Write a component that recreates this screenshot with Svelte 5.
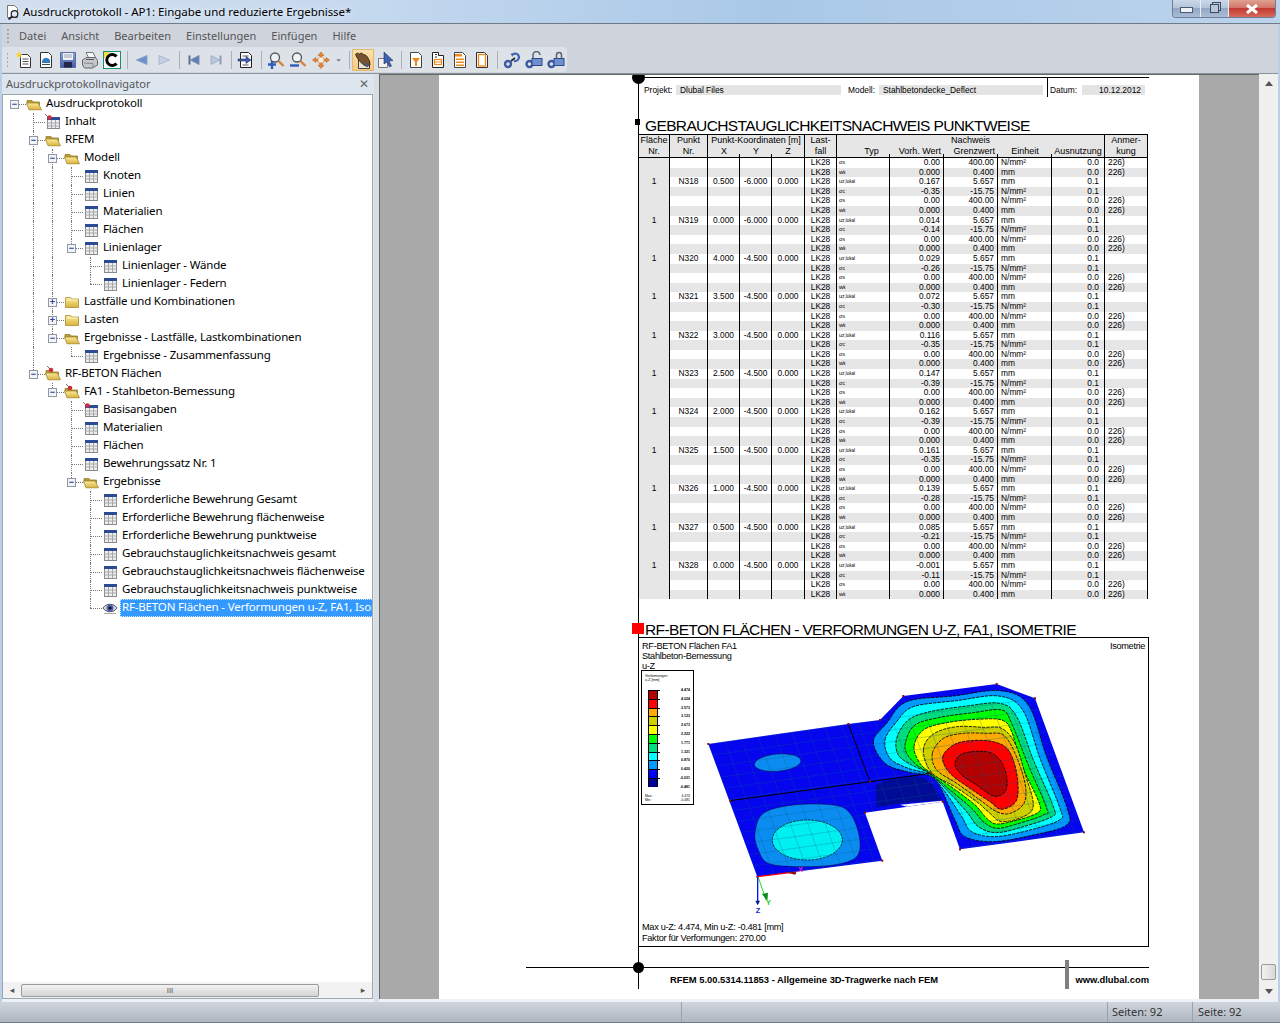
<script>
  const menu = ['Datei', 'Ansicht', 'Bearbeiten', 'Einstellungen', 'Einfügen', 'Hilfe'];

  // toolbar: icon id, or '|' for a separator
  const tools = ['new', 'pic', 'save', 'print', 'c', '|', 'back', 'fwd', '|', 'first', 'last', '|', 'docarrow', '|',
    'zoomin', 'zoomout', 'move', 'drop', '|', 'hand', 'pick', '|', 'dfilter', 'dbox', 'dlines', 'dempty', '|', 'link1', 'link2', 'link3'];

  const tree = [
    [0, 'Ausdruckprotokoll', 'open', '-'],
    [1, 'Inhalt', 'tablepin'],
    [1, 'RFEM', 'open', '-'],
    [2, 'Modell', 'open', '-'],
    [3, 'Knoten', 'table'],
    [3, 'Linien', 'table'],
    [3, 'Materialien', 'table'],
    [3, 'Flächen', 'table'],
    [3, 'Linienlager', 'table', '-'],
    [4, 'Linienlager - Wände', 'table'],
    [4, 'Linienlager - Federn', 'table'],
    [2, 'Lastfälle und Kombinationen', 'closed', '+'],
    [2, 'Lasten', 'closed', '+'],
    [2, 'Ergebnisse - Lastfälle, Lastkombinationen', 'open', '-'],
    [3, 'Ergebnisse - Zusammenfassung', 'table'],
    [1, 'RF-BETON Flächen', 'openpin', '-'],
    [2, 'FA1 - Stahlbeton-Bemessung', 'openpin', '-'],
    [3, 'Basisangaben', 'tablepin'],
    [3, 'Materialien', 'table'],
    [3, 'Flächen', 'table'],
    [3, 'Bewehrungssatz Nr. 1', 'table'],
    [3, 'Ergebnisse', 'open', '-'],
    [4, 'Erforderliche Bewehrung Gesamt', 'table'],
    [4, 'Erforderliche Bewehrung flächenweise', 'table'],
    [4, 'Erforderliche Bewehrung punktweise', 'table'],
    [4, 'Gebrauchstauglichkeitsnachweis gesamt', 'table'],
    [4, 'Gebrauchstauglichkeitsnachweis flächenweise', 'table'],
    [4, 'Gebrauchstauglichkeitsnachweis punktweise', 'table'],
    [4, 'RF-BETON Flächen - Verformungen u-Z, FA1, Isometrie', 'eye']
  ];

  // does level l go on below row i?
  function goesOn(i, l) {
    for (let j = i + 1; j < tree.length; j++) {
      if (tree[j][0] < l) return false;
      if (tree[j][0] === l) return true;
    }
    return false;
  }

  const levels = (n) => Array.from({ length: n }, (_, k) => k);

  const nodes = [
    ['N318', '0.500', '-6.000', '0.167', '-0.35'],
    ['N319', '0.000', '-6.000', '0.014', '-0.14'],
    ['N320', '4.000', '-4.500', '0.029', '-0.26'],
    ['N321', '3.500', '-4.500', '0.072', '-0.30'],
    ['N322', '3.000', '-4.500', '0.116', '-0.35'],
    ['N323', '2.500', '-4.500', '0.147', '-0.39'],
    ['N324', '2.000', '-4.500', '0.162', '-0.39'],
    ['N325', '1.500', '-4.500', '0.161', '-0.35'],
    ['N326', '1.000', '-4.500', '0.139', '-0.28'],
    ['N327', '0.500', '-4.500', '0.085', '-0.21'],
    ['N328', '0.000', '-4.500', '-0.001', '-0.11']
  ];

  const rows = [];
  nodes.forEach((n) => {
    rows.push({ typ: 'σ', sub: 's', vorh: '0.00', grenz: '400.00', unit: 'N/mm²', ausn: '0.0', note: '226)' });
    rows.push({ typ: 'w', sub: 'k', vorh: '0.000', grenz: '0.400', unit: 'mm', ausn: '0.0', note: '226)' });
    rows.push({ node: n, typ: 'u', sub: 'z,lokal', vorh: n[3], grenz: '5.657', unit: 'mm', ausn: '0.1', note: '' });
    rows.push({ typ: 'σ', sub: 'c', vorh: n[4], grenz: '-15.75', unit: 'N/mm²', ausn: '0.1', note: '' });
  });
  rows.push({ typ: 'σ', sub: 's', vorh: '0.00', grenz: '400.00', unit: 'N/mm²', ausn: '0.0', note: '226)' });
  rows.push({ typ: 'w', sub: 'k', vorh: '0.000', grenz: '0.400', unit: 'mm', ausn: '0.0', note: '226)' });

  const legend = [
    ['#b30000', '4.474'], ['#ff0000', '4.024'], ['#ffaa00', '3.573'], ['#cfcf00', '3.123'],
    ['#ffff00', '2.673'], ['#00ff00', '2.222'], ['#00dd80', '1.771'], ['#00ffff', '1.321'],
    ['#0099ff', '0.870'], ['#0000ff', '0.420'], ['#000099', '-0.031']
  ];

  function smooth(p) {
    const n = p.length;
    let d = `M${p[0][0]} ${p[0][1]}`;
    for (let i = 0; i < n; i++) {
      const a = p[(i - 1 + n) % n], b = p[i], c = p[(i + 1) % n], e = p[(i + 2) % n];
      const c1 = [b[0] + (c[0] - a[0]) / 6, b[1] + (c[1] - a[1]) / 6];
      const c2 = [c[0] - (e[0] - b[0]) / 6, c[1] - (e[1] - b[1]) / 6];
      d += `C${c1[0].toFixed(1)} ${c1[1].toFixed(1)} ${c2[0].toFixed(1)} ${c2[1].toFixed(1)} ${c[0]} ${c[1]}`;
    }
    return d + 'Z';
  }

  const outline = '25,222 445,162 540,150 610,78 890,42 1005,85 1152,487 780,538 728,395 495,428 547,572 172,620';
  const corners = outline.split(' ').map((s) => s.split(',').map(Number));
  corners.push([510, 335], [692, 310], [90, 392]);

  const rings = [
    ['#0099ff', [[520,215],[560,160],[620,95],[760,78],[900,62],[985,105],[1040,260],[1100,410],[1100,465],[1000,495],[880,515],[795,500],[765,450],[720,350],[690,318],[620,305],[555,280]]],
    ['#00ffff', [[555,210],[590,155],[640,110],[770,92],[895,78],[968,120],[1020,265],[1080,415],[1078,450],[990,480],[885,500],[815,485],[785,440],[735,365],[690,315],[625,295],[570,265]]],
    ['#00dd80', [[590,205],[625,150],[690,125],[800,108],[900,100],[950,140],[1000,270],[1060,410],[1055,440],[970,470],[890,488],[835,470],[800,425],[745,365],[690,312],[635,285],[595,255]]],
    ['#00ff00', [[617,215],[645,165],[720,142],[820,128],[905,120],[935,160],[985,285],[1040,415],[1030,435],[950,462],[890,475],[850,455],[815,415],[750,360],[690,310],[650,285],[620,250]]],
    ['#ffff00', [[642,230],[670,180],[740,158],[830,148],[905,150],[935,185],[965,285],[1018,400],[1010,430],[945,452],[890,462],[860,445],[825,405],[760,355],[692,308],[660,280]]],
    ['#cfcf00', [[670,240],[700,192],[770,170],[850,172],[905,175],[945,220],[975,310],[1000,405],[970,440],[905,455],[870,430],[830,395],[765,350],[695,308]]],
    ['#ffaa00', [[697,250],[730,205],[790,190],[860,190],[910,195],[945,250],[975,340],[972,400],[930,430],[890,425],[840,390],[770,340],[710,300]]],
    ['#ff0000', [[728,262],[760,225],[810,212],[880,215],[925,240],[950,310],[950,390],[905,418],[870,395],[810,355],[750,310]]],
    ['#b30000', [[765,280],[790,250],[860,245],[900,270],[920,320],[915,365],[880,378],[830,345],[785,315]]]
  ];
  const squarish = smooth([[165,490],[190,430],[280,405],[400,405],[450,430],[478,500],[470,560],[400,585],[290,590],[205,580],[175,540]]);

  const meshU = levels(17).map((k) => {
    const x = 25 + k * 12.25, y = 222 + k * 33.2;
    return [x, y, x + 1180, y - 165];
  });
  const meshV = levels(24).map((k) => {
    const x = 25 + k * 50, y = 222 - k * 7;
    return [x, y, x + 220, y + 597];
  });
</script>

<svg class="defs" aria-hidden="true">
  <defs>
    <linearGradient id="fold" x1="0" y1="0" x2="0" y2="1"><stop offset="0" stop-color="#fbeb9c"/><stop offset="1" stop-color="#d8b23c"/></linearGradient>
    <linearGradient id="flop" x1="0" y1="0" x2="0" y2="1"><stop offset="0" stop-color="#8ea6dc"/><stop offset="1" stop-color="#3f58a8"/></linearGradient>
    <symbol id="table" viewBox="0 0 16 16">
      <rect x="2.5" y="2.5" width="12" height="12" fill="#eceef0" stroke="#8a8a8a"/>
      <rect x="2" y="2" width="13" height="3" fill="#2d4a94"/>
      <path d="M2.5 8h12M2.5 11h12M6.5 5v9M10.5 5v9" stroke="#a8a8a8"/>
    </symbol>
    <symbol id="tablepin" viewBox="0 0 16 16">
      <rect x="2.5" y="3.5" width="12" height="11" fill="#eceef0" stroke="#8a8a8a"/>
      <rect x="2" y="3" width="13" height="3" fill="#2d4a94"/>
      <path d="M2.5 9h12M2.5 12h12M6.5 6v8M10.5 6v8" stroke="#a8a8a8"/>
      <path d="M0 0l3 3" stroke="#777" stroke-width="1"/><circle cx="4.5" cy="3.5" r="2.2" fill="#d22c38"/>
    </symbol>
    <symbol id="open" viewBox="0 0 16 16">
      <path d="M1 4.500h5l1.500 1.500h6v3H1z" fill="#b89a3a" stroke="#8d7420" stroke-width=".7"/>
      <path d="M.5 7h11.700l3.300 6.800H3z" fill="url(#fold)" stroke="#9a7e22" stroke-width=".7"/>
    </symbol>
    <symbol id="closed" viewBox="0 0 16 16">
      <path d="M1.500 3.500h5l1.500 1.500h6.500v8.500h-13z" fill="url(#fold)" stroke="#a98d2e" stroke-width=".8"/>
      <path d="M2.500 6h11" stroke="#fff6c0"/>
    </symbol>
    <symbol id="openpin" viewBox="0 0 16 16">
      <path d="M1 4.500h5l1.500 1.500h6v3H1z" fill="#b89a3a" stroke="#8d7420" stroke-width=".7"/>
      <path d="M.5 7h11.700l3.300 6.800H3z" fill="url(#fold)" stroke="#9a7e22" stroke-width=".7"/>
      <path d="M2 0l3 3" stroke="#777"/><circle cx="6" cy="4" r="2.300" fill="#d22c38"/>
    </symbol>
    <symbol id="eye" viewBox="0 0 16 16">
      <path d="M1 8c3-5 11-5 14 0-3 5-11 5-14 0z" fill="#d6d9e4" stroke="#555"/>
      <circle cx="8" cy="8" r="3.500" fill="#4a62b8"/><circle cx="8" cy="8" r="1.600" fill="#111"/>
      <path d="M2 13.500h12" stroke="#aaa"/>
    </symbol>
    <symbol id="docicon" viewBox="0 0 16 16">
      <path d="M2.500 1.500h7l3 3v9h-10z" fill="#fff" stroke="#777"/>
      <circle cx="9.500" cy="10" r="3.300" fill="#dfe8f4" stroke="#222" stroke-width="1.200"/>
      <path d="M7 12.500L3.500 15.500" stroke="#222" stroke-width="1.800"/>
    </symbol>

    <symbol id="new" viewBox="0 0 18 18">
      <path d="M5.500 3.500h7l3 3v10h-10z" fill="#fff" stroke="#333"/><path d="M7.500 8h6M7.500 10.500h6M7.500 13h6" stroke="#555"/>
      <path d="M4 0l1 2.500 2.500.5-2 1.500.5 2.500L4 5.500 2 7l.5-2.500-2-1.500L3 2.500z" fill="#f7d530"/>
    </symbol>
    <symbol id="pic" viewBox="0 0 18 18">
      <path d="M3.500 1.500h8l3 3v12h-11z" fill="#fff" stroke="#333"/><path d="M5 10c2-4 5-4 8-1v3H5z" fill="#2f7fbd"/><path d="M5 13.500h8" stroke="#444"/>
    </symbol>
    <symbol id="save" viewBox="0 0 18 18">
      <path d="M1.500 1.500h15v15h-15z" fill="url(#flop)" stroke="#5a6f9f"/><rect x="4" y="2" width="10" height="7" fill="#eef1f6"/><path d="M5 4h8M5 6h8" stroke="#9aa3b5"/><rect x="5" y="11" width="8" height="5.500" fill="#23284a"/>
    </symbol>
    <symbol id="print" viewBox="0 0 18 18">
      <path d="M5 1.500h7l3 6H8z" fill="#fafafa" stroke="#777"/><path d="M1.500 9l4-2.500h9l2 3v4.500l-5 3h-8l-2-3z" fill="#c4c8ce" stroke="#666"/><path d="M3 12l9 .5v4" fill="none" stroke="#888"/><path d="M5 8.500h8" stroke="#555"/>
    </symbol>
    <symbol id="c" viewBox="0 0 18 18">
      <rect x=".5" y=".5" width="17" height="17" fill="#fff" stroke="#16906e"/><path d="M1 1h6L1 8z" fill="#f5dc3c"/>
      <path d="M13.500 5.500A5.500 5.500 0 1 0 13.500 12.500" fill="none" stroke="#000" stroke-width="3"/>
    </symbol>
    <symbol id="back" viewBox="0 0 18 18"><path d="M3.500 9L14 4.500v9z" fill="#6d8fd0" stroke="#8aa0c4"/></symbol>
    <symbol id="fwd" viewBox="0 0 18 18"><path d="M14.500 9L4 4.500v9z" fill="#c3d0e2" stroke="#a9b8cc"/></symbol>
    <symbol id="first" viewBox="0 0 18 18"><path d="M4.500 4.500v9" stroke="#5b6d8c" stroke-width="2"/><path d="M5.500 9L14 4.500v9z" fill="#5f80bd" stroke="#7c8ea9"/></symbol>
    <symbol id="last" viewBox="0 0 18 18"><path d="M13.500 4.500v9" stroke="#8c9ab0" stroke-width="2"/><path d="M12.500 9L4 4.500v9z" fill="#b9c8dc" stroke="#a3b1c4"/></symbol>
    <symbol id="docarrow" viewBox="0 0 18 18">
      <path d="M3.500 1.500h8l3 3v12h-11z" fill="#fff" stroke="#222"/><path d="M5.500 5h6M5.500 14h6" stroke="#555"/><path d="M1 8h8V5.500l5 3.500-5 3.500V10H1z" fill="#3b5ea8" stroke="#1f3468" stroke-width=".6"/>
    </symbol>
    <symbol id="zoomin" viewBox="0 0 18 18">
      <circle cx="8" cy="6.500" r="4.500" fill="#eef3f8" stroke="#555" stroke-width="1.300"/><path d="M11.500 10l5 5" stroke="#d9803a" stroke-width="2.400"/><path d="M1 13.500h8M5 10v8" stroke="#2f5cb8" stroke-width="2.400"/>
    </symbol>
    <symbol id="zoomout" viewBox="0 0 18 18">
      <circle cx="8" cy="6.500" r="4.500" fill="#eef3f8" stroke="#555" stroke-width="1.300"/><path d="M11.500 10l5 5" stroke="#d9803a" stroke-width="2.400"/><path d="M1 14.500h9" stroke="#2f5cb8" stroke-width="2.400"/>
    </symbol>
    <symbol id="move" viewBox="0 0 18 18">
      <path d="M9 1l3 3.500h-2v1l3 3h1V6.500L17.500 9 14 11.500v-2h-1l-3 3.500v1h2L9 17.500 6 14h2v-1L5 9.500H4v2L.5 9 4 6.500V8.500h1l3-3v-1H6z" fill="#e8872f" stroke="#a85a18" stroke-width=".5"/><rect x="6.500" y="6.500" width="5" height="5" fill="#f2efe6"/>
    </symbol>
    <symbol id="drop" viewBox="0 0 18 18"><path d="M5 8h7l-3.500 3.500z" fill="#7a7f88"/></symbol>
    <symbol id="hand" viewBox="0 0 18 18">
      <path d="M4.500 6.500v11h11v-7" fill="#e9e4d6" stroke="#444"/><path d="M1.500 3.500c1-2 3-1.500 4-.5l2-1 2 1.500 2 .5 2 2 2 4 .500 4-3 1.500-4-2-4-4-2-3z" fill="#7a5230" stroke="#2a1c10" stroke-width=".8"/><path d="M11 11l4 3-1.500 2z" fill="#2f5cb8"/>
    </symbol>
    <symbol id="pick" viewBox="0 0 18 18">
      <path d="M1.500 7.500h9v9h-9z" fill="#f3f3f3" stroke="#777"/><path d="M7 1l9 8.500-4 .5 2.500 5-2 1-2.500-5L7 13z" fill="#3f62ad" stroke="#1f3468" stroke-width=".6"/>
    </symbol>
    <symbol id="dfilter" viewBox="0 0 18 18">
      <path d="M3.500 1.500h8l3 3v12h-11z" fill="#fff" stroke="#444"/><path d="M5 7h8L10 11v4H8v-4z" fill="#ee8a1e"/>
    </symbol>
    <symbol id="dbox" viewBox="0 0 18 18">
      <path d="M3.500 1.500h6v3h5v12h-11z" fill="#fff" stroke="#222"/><path d="M6 3.500h2M6 6h2" stroke="#333"/><rect x="5.500" y="8.500" width="7" height="5" fill="#fff" stroke="#ee8a1e" stroke-width="1.200"/><path d="M5.500 11h7" stroke="#ee8a1e"/>
    </symbol>
    <symbol id="dlines" viewBox="0 0 18 18">
      <path d="M3.500 1.500h8l3 3v12h-11z" fill="#fff" stroke="#444"/><path d="M4 3h7v2.500H4zM5 7.500h8v1.500H5zM5 10.500h8V12H5zM5 13.500h8V15H5z" fill="#ee8a1e"/>
    </symbol>
    <symbol id="dempty" viewBox="0 0 18 18">
      <path d="M3.500 1.500h8l3 3v12h-11z" fill="#fff" stroke="#333"/><rect x="5.500" y="3.500" width="7" height="11.500" fill="#fff" stroke="#ee8a1e" stroke-width="1.300"/>
    </symbol>
    <symbol id="link1" viewBox="0 0 18 18">
      <circle cx="5" cy="13" r="3" fill="none" stroke="#3c5a9e" stroke-width="2.400"/><path d="M8 10l4-3" stroke="#222" stroke-width="1.600"/><path d="M9 4a4 4 0 0 1 7 2 4 4 0 0 1-5 4" fill="none" stroke="#3f66b4" stroke-width="2.200"/><path d="M7.500 2.500l3 .5-1 3z" fill="#3f66b4"/>
    </symbol>
    <symbol id="link2" viewBox="0 0 18 18">
      <circle cx="4.500" cy="13" r="3" fill="none" stroke="#3c5a9e" stroke-width="2.400"/><rect x="7" y="7.500" width="10" height="7" fill="#6f8fd0" stroke="#2f4a88"/><path d="M8 7V4a3.500 3.500 0 0 1 7 0" fill="none" stroke="#566" stroke-width="1.500"/>
    </symbol>
    <symbol id="link3" viewBox="0 0 18 18">
      <circle cx="4.500" cy="13" r="3" fill="none" stroke="#3c5a9e" stroke-width="2.400"/><rect x="7" y="7.500" width="10" height="7" fill="#6f8fd0" stroke="#2f4a88"/><path d="M9.500 7V4a2.500 2.500 0 0 1 5 0v3" fill="none" stroke="#566" stroke-width="1.500"/>
    </symbol>
  </defs>
</svg>

<div class="app">
  <header class="titlebar">
    <svg class="titleicon"><use href="#docicon"/></svg>
    <span class="title">Ausdruckprotokoll - AP1: Eingabe und reduzierte Ergebnisse*</span>
    <div class="winbtns">
      <span class="wb"><i class="min"></i></span>
      <span class="wb"><i class="rest"></i></span>
      <span class="wb close"><svg width="14" height="10" viewBox="0 0 14 10"><path d="M2 1l10 8M12 1L2 9" stroke="#fff" stroke-width="3"/></svg></span>
    </div>
  </header>

  <div class="frame">
    <nav class="menubar">
      <span class="grip"></span>
      {#each menu as m}<span>{m}</span>{/each}
    </nav>

    <div class="toolrow">
      <div class="toolbar">
        <span class="grip"></span>
        {#each tools as t}
          {#if t === '|'}
            <span class="sep"></span>
          {:else}
            <span class="tool {t}"><svg width="18" height="18"><use href="#{t}"/></svg></span>
          {/if}
        {/each}
      </div>
    </div>

    <div class="main">
      <aside class="panel">
        <div class="panelhead"><span>Ausdruckprotokollnavigator</span><b>✕</b></div>
        <div class="tree">
          {#each tree as [level, text, icon, toggle], i}
            <div class="row">
              <span class="lead"></span>
              {#each levels(level) as l}
                <span class="indent" class:line={l > 0 && goesOn(i, l)}></span>
              {/each}
              <span class="node">
                {#if level > 0}<i class="v" class:half={!goesOn(i, level)}></i>{/if}
                <i class="h"></i>
                {#if toggle}<i class="toggle">{toggle === '-' ? '−' : '+'}</i>{/if}
                <svg class="ico"><use href="#{icon}"/></svg>
              </span>
              <span class="label" class:sel={icon === 'eye'}>{text}</span>
            </div>
          {/each}
        </div>
        <div class="hscroll">
          <span class="arr">◂</span>
          <span class="thumb">III</span>
          <span class="arr">▸</span>
        </div>
      </aside>

      <div class="split"></div>

      <section class="view">
        <div class="canvas">
          <div class="page">
            <div class="sheet">
              <div class="meta">
                <span class="k k1">Projekt:</span><span class="f f1">Dlubal Files</span>
                <span class="k k2">Modell:</span><span class="f f2">Stahlbetondecke_Deflect</span>
                <span class="vsep"></span>
                <span class="k k3">Datum:</span><span class="f f3">10.12.2012</span>
              </div>

              <h2 class="sect first">GEBRAUCHSTAUGLICHKEITSNACHWEIS PUNKTWEISE</h2>

              <div class="thead">
                <div class="th g" style="grid-row: span 2">Fläche<br>Nr.</div>
                <div class="th g" style="grid-row: span 2">Punkt<br>Nr.</div>
                <div class="th g top" style="grid-column: span 3">Punkt-Koordinaten [m]</div>
                <div class="th g" style="grid-row: span 2">Last-<br>fall</div>
                <div class="th g top" style="grid-column: span 5">Nachweis</div>
                <div class="th g" style="grid-row: span 2">Anmer-<br>kung</div>
                <div class="th tick">X</div>
                <div class="th tick">Y</div>
                <div class="th g">Z</div>
                <div class="th tick typ">Typ</div>
                <div class="th tick rt">Vorh. Wert</div>
                <div class="th tick rt">Grenzwert</div>
                <div class="th tick">Einheit</div>
                <div class="th g">Ausnutzung</div>
              </div>

              <div class="tbody">
                {#each rows as r, i}
                  <div class="tr" class:alt={i % 2 === 1}>
                    <span class="td c0">{r.node ? '1' : ''}</span>
                    <span class="td">{r.node ? r.node[0] : ''}</span>
                    <span class="td">{r.node ? r.node[1] : ''}</span>
                    <span class="td">{r.node ? r.node[2] : ''}</span>
                    <span class="td">{r.node ? '0.000' : ''}</span>
                    <span class="td">LK28</span>
                    <span class="td lf">{r.typ}<sub>{r.sub}</sub></span>
                    <span class="td rt">{r.vorh}</span>
                    <span class="td rt">{r.grenz}</span>
                    <span class="td lf u">{r.unit}</span>
                    <span class="td rt au">{r.ausn}</span>
                    <span class="td lf n">{r.note}</span>
                  </div>
                {/each}
              </div>

              <h2 class="sect second">RF-BETON FLÄCHEN - VERFORMUNGEN U-Z, FA1, ISOMETRIE</h2>

              <figure class="fig">
                <div class="fighead">
                  <div>RF-BETON Flächen FA1<br>Stahlbeton-Bemessung<br>u-Z</div>
                  <div>Isometrie</div>
                </div>
                <div class="figbody">
                  <div class="legend">
                    <div class="lgtitle">Verformungen<br>u-Z [mm]</div>
                    <div class="bars">
                      {#each legend as [col, val]}
                        <div class="bar"><i style="background:{col}"></i><em></em><span>{val}</span></div>
                      {/each}
                      <div class="bar lastval"><span>-0.481</span></div>
                    </div>
                    <div class="minmax"><span>Max :</span><span>4.474</span></div>
                    <div class="minmax"><span>Min :</span><span>-0.481</span></div>
                  </div>
                  <svg class="plot" width="400" height="250" viewBox="0 0 1200 750">
                    <defs>
                      <clipPath id="plate"><polygon points={outline}/></clipPath>
                    </defs>
                    <polygon points={outline} fill="#0606ee"/>
                    <polygon points="527,345 555,332 640,318 675,325 705,350 725,392 640,395 530,412" fill="#000c96"/>
                    <polygon points="600,404 725,392 728,395 620,410" fill="#fff"/>
                    <ellipse cx="233" cy="278" rx="70" ry="26" transform="rotate(-5 233 278)" fill="#0a8cf0" stroke="#003" stroke-width="1.500"/>
                    <path d={squarish} fill="#0a8cf0" stroke="#003" stroke-width="1.500"/>
                    <ellipse cx="322" cy="510" rx="105" ry="60" fill="#00f0f0" stroke="#000" stroke-width="2" stroke-dasharray="8 3"/>
                    {#each rings as [col, pts]}
                      <path d={smooth(pts)} fill={col} stroke="#000" stroke-width="2.500" stroke-dasharray="10 3"/>
                    {/each}
                    <g clip-path="url(#plate)" stroke="#0b5f8c" stroke-opacity=".5" stroke-width="1.600">
                      {#each meshU as [a, b, c, d]}<line x1={a} y1={b} x2={c} y2={d}/>{/each}
                      {#each meshV as [a, b, c, d]}<line x1={a} y1={b} x2={c} y2={d}/>{/each}
                    </g>
                    <path d="M445 162L510 335M90 392L510 335 692 310" fill="none" stroke="#000" stroke-width="3"/>
                    {#each corners as [x, y]}
                      <rect x={x - 3} y={y - 3} width="6" height="6" fill="#8c0f0f"/>
                    {/each}
                    <path d="M172 620L270 608" stroke="#f00" stroke-width="4"/>
                    <path d="M260 608l30-4-4 10z" fill="#8c0f0f"/>
                    <path d="M175 622L198 690" stroke="#18e018" stroke-width="3"/>
                    <path d="M186 672l18-4-2 24z" fill="#0d8a1e"/>
                    <path d="M173 620v82" stroke="#0a14f0" stroke-width="4"/>
                    <path d="M166 692h14l-7 14z" fill="#0a1a78"/>
                    <text x="294" y="606" class="ax" fill="#e020c0">X</text>
                    <text x="198" y="706" class="ax" fill="#12d018">Y</text>
                    <text x="167" y="728" class="ax" fill="#1028d0">Z</text>
                  </svg>
                </div>
                <div class="figfoot">Max u-Z: 4.474, Min u-Z: -0.481 [mm]<br>Faktor für Verformungen: 270.00</div>
              </figure>

              <footer class="pagefoot">
                <span class="ftext">RFEM 5.00.5314.11853 - Allgemeine 3D-Tragwerke nach FEM</span>
                <span class="fbar"></span>
                <span class="furl">www.dlubal.com</span>
              </footer>
            </div>
          </div>
        </div>
        <div class="vscroll">
          <span class="up"></span>
          <span class="vspace"></span>
          <span class="vthumb"></span>
          <span class="down"></span>
        </div>
      </section>
    </div>
  </div>

  <footer class="status">
    <span class="s1"></span>
    <span class="s2"></span>
    <span class="s3">Seiten: 92</span>
    <span class="s4">Seite: 92</span>
  </footer>
</div>

<style>
  :global(body) {
    margin: 0;
    background: #cfd4dc;
  }

  .defs {
    position: absolute;
    width: 0;
    height: 0;
  }

  .app {
    width: 1280px;
    height: 1023px;
    display: flex;
    flex-direction: column;
    overflow: hidden;
    font-family: "Noto Sans", sans-serif;
  }

  .titlebar {
    height: 23px;
    flex: none;
    display: flex;
    align-items: center;
    padding-left: 5px;
    background: linear-gradient(90deg, #d2dfee 0, #c4d8ee 30%, #a9c8e8 60%, #bcd3ec 100%);
    border-bottom: 1px solid #6f7a88;
  }

  .titleicon {
    width: 16px;
    height: 16px;
    margin-right: 2px;
  }

  .title {
    font-size: 11.5px;
    letter-spacing: -0.04px;
    color: #000;
    text-shadow: 0 0 6px #fff;
  }

  .winbtns {
    margin-left: auto;
    margin-right: 4px;
    align-self: flex-start;
    display: flex;
    height: 17px;
    border: 1px solid #6c7f96;
    border-top: 0;
    border-radius: 0 0 4px 4px;
    overflow: hidden;
  }

  .wb {
    width: 27px;
    display: flex;
    align-items: center;
    justify-content: center;
    background: linear-gradient(#cbd8e8 0, #b4c5da 45%, #93a8c4 50%, #a9bdd6 100%);
    border-right: 1px solid #e7eef6;
  }

  .wb.close {
    width: 46px;
    border-right: 0;
    background: linear-gradient(#e0a090 0, #d2766a 45%, #c23a30 50%, #d6695c 100%);
  }

  .min {
    width: 11px;
    height: 4px;
    margin-top: 3px;
    background: #eef2f6;
    border: 1px solid #4a5a70;
  }

  .rest {
    width: 7px;
    height: 7px;
    background: #b8c6d8;
    border: 1px solid #3a4a60;
    box-shadow: 2px -2px 0 -1px #b8c6d8, 2px -2px 0 0 #3a4a60;
  }

  .frame {
    flex: 1;
    min-height: 0;
    display: flex;
    flex-direction: column;
    background: #cfd4dc;
    border-left: 2px solid #b9d0e8;
    border-right: 2px solid #b9d0e8;
  }

  .grip {
    width: 2px;
    height: 14px;
    background: repeating-linear-gradient(#a3a9b2 0 2px, transparent 2px 4px);
  }

  .menubar {
    height: 23px;
    flex: none;
    display: flex;
    align-items: center;
    gap: 15px;
    padding-left: 5px;
    font-size: 11px;
    color: #555;
  }

  .menubar .grip {
    margin-right: -5px;
  }

  .toolrow {
    height: 26px;
    flex: none;
  }

  .toolbar {
    width: 565px;
    height: 25px;
    display: flex;
    align-items: center;
    padding-left: 5px;
    box-sizing: border-box;
    background: #dde2e9;
    border-radius: 0 4px 4px 0;
  }

  .toolbar .grip {
    margin-right: 5px;
  }

  .tool {
    width: 22px;
    height: 22px;
    display: flex;
    align-items: center;
    justify-content: center;
    flex: none;
  }

  .tool.drop {
    width: 12px;
  }

  .tool.move {
    width: 24px;
  }

  .tool.hand {
    margin: 0 1px 0 -1px;
    background: linear-gradient(#fbe3b0, #f6c680);
    box-shadow: inset 0 0 0 1px #e3b874;
  }

  .sep {
    width: 1px;
    height: 18px;
    margin: 0 3.5px;
    background: #a9b0ba;
    flex: none;
  }

  .main {
    flex: 1;
    min-height: 0;
    display: flex;
    border-top: 1px solid #8a929c;
    background: #eef1f5;
  }

  .panel {
    width: 372px;
    flex: none;
    display: flex;
    flex-direction: column;
    margin-bottom: 3px;
    background: #dde5ee;
  }

  .panelhead {
    height: 20px;
    flex: none;
    display: flex;
    align-items: center;
    justify-content: space-between;
    padding: 0 5px 2px 4px;
    box-sizing: border-box;
    font-size: 11px;
    color: #555;
  }

  .panelhead b {
    font-weight: 400;
    font-size: 12px;
    color: #666;
  }

  .tree {
    flex: 1;
    min-height: 0;
    overflow: hidden;
    background: #fff;
    border: 1px solid #9ea6b0;
    border-width: 1px 1px 0;
    margin-right: 1px;
  }

  .row {
    height: 18px;
    display: flex;
    align-items: center;
    white-space: nowrap;
  }

  .lead {
    width: 11px;
    flex: none;
  }

  .indent {
    width: 19px;
    height: 18px;
    flex: none;
    box-sizing: border-box;
  }

  .indent.line {
    border-left: 1px dotted #777;
  }

  .node {
    position: relative;
    width: 32px;
    height: 18px;
    flex: none;
  }

  .v {
    position: absolute;
    left: 0;
    top: 0;
    height: 18px;
    border-left: 1px dotted #777;
  }

  .v.half {
    height: 9px;
  }

  .h {
    position: absolute;
    left: 0;
    top: 9px;
    width: 12px;
    border-top: 1px dotted #777;
  }

  .toggle {
    position: absolute;
    left: -4px;
    top: 5px;
    width: 9px;
    height: 9px;
    box-sizing: border-box;
    background: #f2f4f6;
    border: 1px solid #8f98a4;
    font: 700 9px/7px "Liberation Sans", sans-serif;
    text-align: center;
    color: #2a3f9a;
  }

  .ico {
    position: absolute;
    left: 12px;
    top: 1px;
    width: 16px;
    height: 16px;
  }

  .label {
    font-size: 11.5px;
    line-height: 16px;
    margin-bottom: 2px;
    letter-spacing: -0.17px;
    color: #000;
    flex: none;
  }

  .label.sel {
    margin: 0 0 0 -2px;
    padding: 0 0 2px 2px;
    background: #3399ff;
    color: #fff;
    outline: 1px dotted #cfe6ff;
    outline-offset: -1px;
  }

  .hscroll {
    height: 16px;
    flex: none;
    display: flex;
    align-items: center;
    background: #f2f2f2;
    border: 1px solid #9ea6b0;
    border-width: 0 1px 1px;
    margin-right: 1px;
  }

  .arr {
    width: 18px;
    text-align: center;
    font: 9px "DejaVu Sans", sans-serif;
    color: #555;
  }

  .hscroll .arr:last-child {
    margin-left: auto;
  }

  .thumb {
    width: 298px;
    height: 13px;
    box-sizing: border-box;
    background: linear-gradient(#f2f2f2, #d4d4d4);
    border: 1px solid #9a9a9a;
    border-radius: 2px;
    text-align: center;
    font: 8px/11px "Liberation Sans", sans-serif;
    color: #555;
  }

  .split {
    width: 5px;
    flex: none;
    background: #d9dee5;
  }

  .view {
    flex: 1;
    min-width: 0;
    display: flex;
    margin-bottom: 3px;
    border-left: 1px solid #666;
  }

  .canvas {
    flex: 1;
    min-width: 0;
    overflow: hidden;
    padding-left: 59px;
    background: #a9a9a9;
    border-top: 1px solid #666;
  }

  .page {
    width: 760px;
    height: 100%;
    background: #fff;
    overflow: hidden;
    font-family: "Liberation Sans", Arial, sans-serif;
    color: #000;
  }

  .sheet {
    position: relative;
    width: 510px;
    height: 911px;
    margin: 2px 0 0 199px;
    border-left: 1px solid #000;
    border-top: 1px solid #000;
  }

  .sheet::before {
    content: '';
    position: absolute;
    left: -7px;
    top: -7px;
    width: 13px;
    height: 13px;
    border-radius: 50%;
    background: #000;
  }

  .meta {
    height: 10px;
    margin-top: 7px;
    display: flex;
    align-items: center;
    font-size: 8.4px;
    position: relative;
  }

  .k {
    flex: none;
  }

  .k1 {
    margin-left: 5px;
    width: 32px;
  }

  .k2 {
    margin-left: 7px;
    width: 31px;
  }

  .k3 {
    margin-left: 7px;
    width: 32px;
  }

  .f {
    height: 10px;
    line-height: 10px;
    padding-left: 4px;
    box-sizing: border-box;
    background: #e4e4e4;
    flex: none;
  }

  .f1 {
    width: 165px;
  }

  .f2 {
    width: 164px;
  }

  .f3 {
    width: 63px;
    text-align: right;
    padding-right: 4px;
  }

  .vsep {
    position: absolute;
    left: 408px;
    top: -8px;
    height: 20px;
    border-left: 1px solid #000;
  }

  .sect {
    position: relative;
    margin: 23px 0 0 6px;
    height: 15px;
    font-size: 15.5px;
    letter-spacing: -0.63px;
    font-weight: 400;
    line-height: 15px;
    white-space: nowrap;
  }

  .sect::before {
    content: '';
    position: absolute;
    left: -10px;
    top: 1px;
    width: 5px;
    height: 6px;
    background: #000;
  }

  .sect.first {
    margin-bottom: 1px;
  }

  .sect.second {
    margin-top: 23px;
  }

  .sect.second::before {
    left: -13px;
    top: 1px;
    width: 12px;
    height: 11px;
    background: #f00;
  }

  .thead,
  .tr {
    display: grid;
    grid-template-columns: 31px 38px 32px 32px 33px 32px 53px 54px 54px 54px 53px 43px;
  }

  .thead {
    width: 509px;
    height: 24px;
    box-sizing: border-box;
    grid-template-rows: 11px 11px;
    border-top: 1px solid #000;
    border-bottom: 1px solid #000;
    background: #e6e6e6;
    font-size: 9px;
    line-height: 11px;
    text-align: center;
  }

  .th {
    position: relative;
    white-space: nowrap;
  }

  .th.g {
    border-right: 1px solid #000;
  }

  .th.top {
    border-right: 1px solid #000;
  }

  .th.tick::after {
    content: '';
    position: absolute;
    right: 0;
    bottom: 0;
    height: 3px;
    border-right: 1px solid #000;
  }

  .th.typ {
    padding-left: 16px;
    box-sizing: border-box;
  }

  .th.rt {
    text-align: right;
    padding-right: 3px;
  }

  .tbody {
    width: 509px;
    height: 441px;
    display: flex;
    flex-direction: column;
  }

  .tr {
    flex: 1;
    min-height: 0;
    font-size: 8.4px;
    line-height: 9.6px;
    text-align: center;
  }

  .tr.alt {
    background: #e6e6e6;
  }

  .td {
    border-right: 1px solid #000;
    white-space: nowrap;
    overflow: hidden;
  }

  .td.c0 {
    background: #e6e6e6;
  }

  .td.lf {
    text-align: left;
    padding-left: 2px;
    font-size: 6px;
  }

  .td.lf sub {
    font-size: 4.5px;
    vertical-align: baseline;
  }

  .td.u,
  .td.n {
    font-size: 8.4px;
    padding-left: 3px;
  }

  .td.rt {
    text-align: right;
    padding-right: 3px;
  }

  .td.au {
    padding-right: 5px;
  }

  .fig {
    width: 510px;
    height: 310px;
    margin: 0;
    box-sizing: border-box;
    border: 1px solid #000;
    border-left: 0;
    font-size: 9.2px;
    letter-spacing: -0.3px;
    line-height: 10px;
  }

  .fighead {
    display: flex;
    justify-content: space-between;
    padding: 3px 3px 0;
  }

  .figbody {
    display: flex;
    margin-top: -1px;
    letter-spacing: 0;
  }

  .legend {
    width: 53px;
    height: 135px;
    margin-left: 2px;
    box-sizing: border-box;
    border: 1px solid #000;
    padding: 3px 3px 0 3px;
    font-size: 3.6px;
    line-height: 4px;
    flex: none;
  }

  .lgtitle {
    height: 16px;
  }

  .bars {
    margin-left: 3px;
  }

  .bar {
    height: 8.800px;
    display: flex;
    align-items: flex-start;
    position: relative;
  }

  .bar i {
    width: 10px;
    height: 8.800px;
    box-sizing: border-box;
    border: solid #000;
    border-width: 1px 1px 0;
    flex: none;
  }

  .bar em {
    width: 2px;
    height: 1px;
    background: #000;
  }

  .bar span {
    margin-left: auto;
    margin-top: -2px;
    font-weight: 700;
  }

  .lastval {
    height: 3px;
    border-top: 0;
  }

  .minmax {
    display: flex;
    justify-content: space-between;
    font-size: 3.4px;
    line-height: 4px;
  }

  .bars + .minmax {
    margin-top: 4px;
  }

  .plot {
    margin-left: 6px;
    flex: none;
  }

  .ax {
    font: 700 22px "Liberation Sans", sans-serif;
  }

  .figfoot {
    padding: 2px 3px 0;
    line-height: 11px;
  }

  .pagefoot {
    position: relative;
    width: 623px;
    height: 21px;
    margin: 20px 0 0 -113px;
    box-sizing: border-box;
    border-top: 1px solid #000;
    display: flex;
    align-items: center;
    font-size: 9.4px;
    font-weight: 700;
    white-space: nowrap;
  }

  .pagefoot::before {
    content: '';
    position: absolute;
    left: 107px;
    top: -6px;
    width: 11px;
    height: 11px;
    border-radius: 50%;
    background: #000;
  }

  .ftext {
    margin-left: 144px;
    padding-top: 3px;
  }

  .fbar {
    position: absolute;
    left: 539px;
    top: -8px;
    width: 4px;
    height: 29px;
    background: #808080;
  }

  .furl {
    margin-left: auto;
    padding-top: 3px;
  }

  .vscroll {
    width: 19px;
    flex: none;
    display: flex;
    flex-direction: column;
    align-items: center;
    background: #f0f0f0;
  }

  .up,
  .down {
    width: 0;
    height: 0;
    margin: 7px 0;
    border: 4px solid transparent;
  }

  .up {
    border-bottom: 5px solid #555;
    border-top: 0;
  }

  .down {
    margin: 9px 0 5px;
    border-top: 5px solid #555;
    border-bottom: 0;
  }

  .vspace {
    flex: 1;
  }

  .vthumb {
    width: 15px;
    height: 16px;
    box-sizing: border-box;
    background: linear-gradient(90deg, #f2f2f2, #d8d8d8);
    border: 1px solid #9a9a9a;
    border-radius: 2px;
  }

  .status {
    height: 20px;
    flex: none;
    display: flex;
    align-items: center;
    font-size: 11px;
    color: #333;
    background: linear-gradient(#cfd5dc, #aeb6c0);
    border-bottom: 1px solid #6f7a88;
  }

  .status span {
    height: 100%;
    line-height: 20px;
    box-sizing: border-box;
    border-right: 1px solid #9aa2ac;
  }

  .s1 {
    width: 682px;
  }

  .s2 {
    width: 426px;
  }

  .s3 {
    width: 85px;
    padding-left: 4px;
  }

  .s4 {
    flex: 1;
    padding-left: 5px;
    border-right: 0 !important;
  }
</style>
